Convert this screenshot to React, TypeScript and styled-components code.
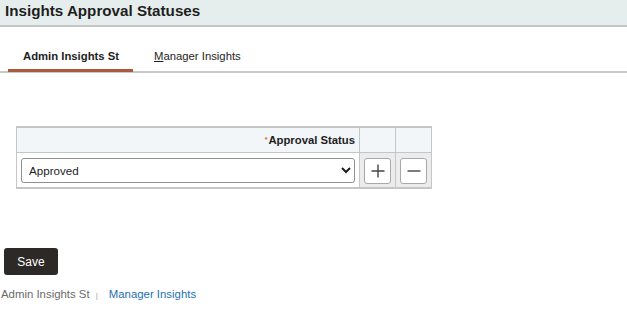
import React from "react";
import styled, { createGlobalStyle } from "styled-components";

const Global = createGlobalStyle`
  html, body { margin: 0; padding: 0; background: #fff; }
  body { font-family: "Liberation Sans", Arial, sans-serif; color: #222; }
`;

const Page = styled.div`
  width: 627px;
  height: 336px;
  display: flex;
  flex-direction: column;
  overflow: hidden;
`;

const Header = styled.header`
  height: 25px;
  background: #e6eeed;
  border-bottom: 2px solid #c4c6c4;
  display: flex;
  align-items: center;
  padding-left: 5px;
`;

const Title = styled.h1`
  margin: 0;
  font-size: 15.2px;
  font-weight: bold;
  color: #1e1e1e;
  position: relative;
  top: -2px;
`;

const TabBar = styled.nav`
  height: 44px;
  border-bottom: 2px solid #c9c9c6;
  display: flex;
  padding-left: 8px;
`;

const Tab = styled.div<{ $active?: boolean }>`
  height: 45px;
  box-sizing: border-box;
  padding: 16px 14px 0 15px;
  white-space: nowrap;
  display: flex;
  align-items: center;
  font-size: 11.3px;
  font-weight: ${(p) => (p.$active ? "bold" : "normal")};
  color: #1e1e1e;
  border-bottom: 3px solid ${(p) => (p.$active ? "#a75a3c" : "transparent")};
  margin-right: 6px;
`;

const U = styled.span`
  text-decoration: underline;
`;

const Content = styled.div`
  padding: 53px 0 0 16px;
`;

const Grid = styled.table`
  border-collapse: collapse;
  width: 416px;
  border: 1px solid #c6c6c6;
  border-top-width: 2px;
  border-bottom-width: 2px;
  font-size: 12px;
`;

const HeadCell = styled.th<{ $w?: number }>`
  background: #f2f6f8;
  border: 1px solid #c6c6c6;
  height: 25px;
  padding: 0 4px;
  text-align: right;
  font-size: 11.3px;
  font-weight: bold;
  color: #1e1e1e;
  width: ${(p) => (p.$w ? `${p.$w}px` : "auto")};
  box-sizing: border-box;
`;

const Req = styled.span`
  color: #c46a4a;
  font-size: 7px;
  vertical-align: 2px;
  margin-right: 1px;
`;

const Cell = styled.td<{ $grey?: boolean }>`
  border: 1px solid #c6c6c6;
  background: ${(p) => (p.$grey ? "#ececec" : "#fff")};
  height: 36px;
  padding: 0 4px;
  box-sizing: border-box;
  vertical-align: middle;
`;

const Select = styled.select`
  width: 334px;
  height: 25px;
  font-family: "Liberation Sans", Arial, sans-serif;
  font-size: 11.6px;
  color: #1e1e1e;
  border: 1px solid #8f8f8f;
  border-radius: 3px;
  background: #fff;
  padding: 0 2px 0 3px;
  display: block;
  margin-top: 2px;
`;

const IconButton = styled.button`
  width: 27px;
  height: 26px;
  border: 1px solid #a8a8a8;
  border-radius: 3px;
  background: #fff;
  padding: 0;
  display: flex;
  align-items: center;
  justify-content: center;
  margin: 2px auto 0;
`;

const Footer = styled.div`
  padding: 59px 0 0 4px;
  display: flex;
  flex-direction: column;
  gap: 13px;
`;

const SaveButton = styled.button`
  width: 54px;
  height: 27px;
  background: #2d2926;
  color: #fff;
  border: none;
  border-radius: 3px;
  font-family: "Liberation Sans", Arial, sans-serif;
  font-size: 12px;
  font-weight: normal;
`;

const Links = styled.div`
  display: flex;
  align-items: center;
  font-size: 11.4px;
  margin-left: -3px;
`;

const Crumb = styled.span`
  color: #6a6a6a;
`;

const Sep = styled.span`
  color: #9a9a9a;
  font-size: 8px;
  margin: 2px 11px 0 6px;
`;

const Link = styled.a`
  color: #2470b3;
  text-decoration: none;
`;

const PlusIcon = () => (
  <svg width="16" height="16" viewBox="0 0 16 16">
    <path d="M8 1.5v13M1.5 8h13" stroke="#444" strokeWidth="1.4" fill="none" />
  </svg>
);

const MinusIcon = () => (
  <svg width="16" height="16" viewBox="0 0 16 16">
    <path d="M1.5 8h13" stroke="#444" strokeWidth="1.4" fill="none" />
  </svg>
);

export default function App() {
  return (
    <Page>
      <Global />
      <Header>
        <Title>Insights Approval Statuses</Title>
      </Header>
      <TabBar>
        <Tab $active>Admin Insights St</Tab>
        <Tab>
          <U>M</U>anager Insights
        </Tab>
      </TabBar>
      <Content>
        <Grid>
          <thead>
            <tr>
              <HeadCell>
                <Req>*</Req>Approval Status
              </HeadCell>
              <HeadCell $w={36} />
              <HeadCell $w={36} />
            </tr>
          </thead>
          <tbody>
            <tr>
              <Cell>
                <Select defaultValue="Approved">
                  <option>Approved</option>
                  <option>Pending</option>
                  <option>Rejected</option>
                </Select>
              </Cell>
              <Cell $grey>
                <IconButton aria-label="Add row">
                  <PlusIcon />
                </IconButton>
              </Cell>
              <Cell $grey>
                <IconButton aria-label="Delete row">
                  <MinusIcon />
                </IconButton>
              </Cell>
            </tr>
          </tbody>
        </Grid>
      </Content>
      <Footer>
        <SaveButton>Save</SaveButton>
        <Links>
          <Crumb>Admin Insights St</Crumb>
          <Sep>|</Sep>
          <Link href="#">Manager Insights</Link>
        </Links>
      </Footer>
    </Page>
  );
}
